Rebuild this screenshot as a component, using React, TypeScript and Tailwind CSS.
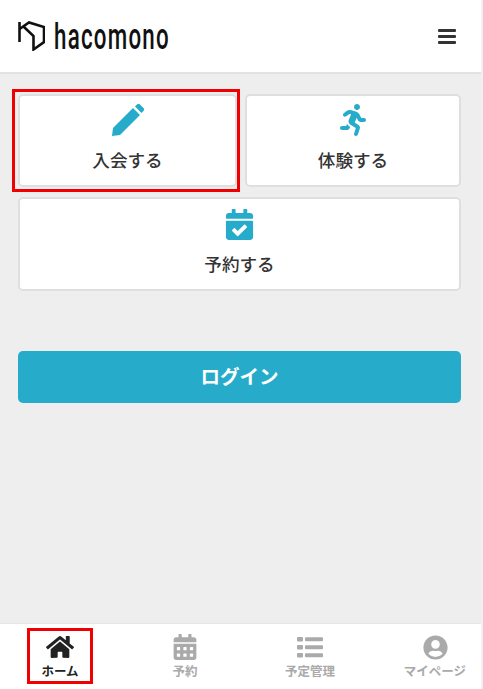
import { FaCalendarAlt, FaCalendarCheck, FaHome, FaRunning, FaUserCircle } from "react-icons/fa";
import type { ReactNode } from "react";

const font = { fontFamily: '"Noto Sans CJK JP", "Noto Sans", sans-serif' };

function ActionCard({ icon, label, className, marked }: { icon: ReactNode; label: string; className: string; marked?: boolean }) {
  return (
    <div className={`relative flex flex-col items-center rounded-[5px] border-2 border-[#dfdfdf] bg-white ${className}`}>
      {marked && <div className="absolute -top-[7px] -right-[5px] -bottom-[7px] -left-[8px] border-[3px] border-[#f00000]" />}
      <div className="flex h-[36px] items-center text-[#26acca]">{icon}</div>
      <span className="mt-[9px] text-[17.6px] leading-[26px] font-medium text-[#333]">{label}</span>
    </div>
  );
}

function TabItem({ icon, label, active }: { icon: ReactNode; label: string; active?: boolean }) {
  return (
    <div className={`relative flex w-[120px] shrink-0 flex-col items-center pt-[10px] ${active ? "text-[#222]" : "text-[#aaa]"}`}>
      {active && <div className="absolute left-[27px] top-[4px] h-[56px] w-[66px] border-[3px] border-[#f00000]" />}
      <div className="flex h-[26px] items-center">{icon}</div>
      <span className="mt-[2px] text-[12.5px] leading-[18px] font-bold whitespace-nowrap">{label}</span>
    </div>
  );
}

export default function App() {
  return (
    <div className="h-[689px] w-[483px] bg-[#f0f0f0]" style={font}>
      <div className="flex h-full w-[481px] flex-col bg-[#eeeeee]">
        <header className="flex h-[74px] items-center justify-between border-b-2 border-[#e2e2e2] bg-white pr-[25px] pl-[18px]">
          <div className="flex items-center gap-[9px]">
            <svg width="27" height="30" viewBox="0 0 27 30" fill="none" stroke="#111" strokeWidth="2.6">
              <path d="M1.5 1V21" />
              <path d="M1.5 8L11 1.5L26 6V21L15.5 28.5V15L6 6" />
            </svg>
            <div className="mt-[1px] h-[36px] w-[112px]">
              <span
                className="inline-block origin-left scale-x-[0.62] text-[36px] leading-[36px] font-medium tracking-[2px] text-[#111]"
                style={{ fontFamily: "Roboto, sans-serif" }}
              >
                hacomono
              </span>
            </div>
          </div>
          <svg width="18" height="15" viewBox="0 0 18 15" fill="#333">
            <rect y="0" width="18" height="3" rx="1" />
            <rect y="6" width="18" height="3" rx="1" />
            <rect y="12" width="18" height="3" rx="1" />
          </svg>
        </header>

        <main className="flex-1 pr-[20px] pl-[18px] pt-[20px]">
          <div className="flex gap-[8px]">
            <ActionCard
              className="h-[93px] w-[219px] pt-[6px]"
              icon={
                <svg width="32" height="32" viewBox="0 0 32 32" fill="currentColor">
                  <path d="M0 32L1 24L21 4L28 11L8 31Z" />
                  <path d="M23 2.5L25 .6A2 2 0 0 1 28 .6L31.4 4A2 2 0 0 1 31.4 7L29.5 9Z" />
                </svg>
              }
              label="入会する"
              marked
            />
            <ActionCard className="h-[93px] w-[216px] pt-[6px]" icon={<FaRunning size={32} />} label="体験する" />
          </div>
          <ActionCard className="mt-[10px] h-[94px] pt-[7px]" icon={<FaCalendarCheck size={31} />} label="予約する" />
          <button className="mt-[60px] flex h-[52px] w-full items-center justify-center rounded-[5px] bg-[#26acca] pb-[2px] text-[19.5px] font-bold text-white">
            ログイン
          </button>
        </main>

        <nav className="flex h-[66px] gap-[5px] overflow-hidden border-t border-[#e6e6e6] bg-white">
          <TabItem icon={<FaHome size={28} />} label="ホーム" active />
          <TabItem icon={<FaCalendarAlt size={26} />} label="予約" />
          <TabItem
            icon={
              <svg width="26" height="21" viewBox="0 0 26 21" fill="currentColor">
                <rect x="0" y="0" width="6" height="4.5" rx="1" />
                <rect x="8" y="0.3" width="18" height="4" rx="1" />
                <rect x="0" y="8" width="6" height="4.5" rx="1" />
                <rect x="8" y="8.3" width="18" height="4" rx="1" />
                <rect x="0" y="16" width="6" height="4.5" rx="1" />
                <rect x="8" y="16.3" width="18" height="4" rx="1" />
              </svg>
            }
            label="予定管理"
          />
          <TabItem icon={<FaUserCircle size={25} />} label="マイページ" />
        </nav>
      </div>
    </div>
  );
}
